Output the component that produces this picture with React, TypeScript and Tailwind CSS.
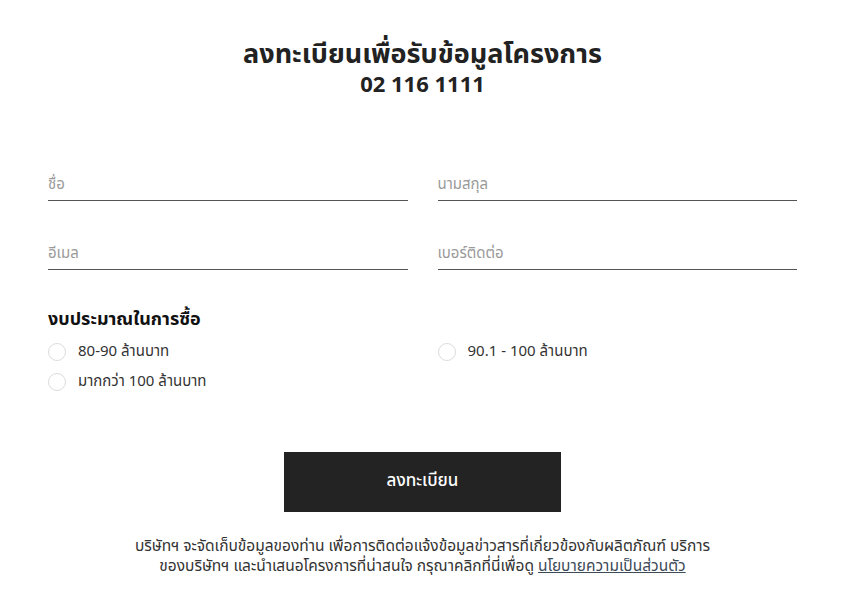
import React from "react";

const font = { fontFamily: '"Noto Sans Thai", "Noto Sans", "Liberation Sans", sans-serif' };

function Field({ label }: { label: string }) {
  return (
    <div className="border-b border-[#555] pb-[5px]">
      <div className="text-[15px] text-[#9a9a9a] leading-[20px]">{label}</div>
    </div>
  );
}

function Radio({ label }: { label: string }) {
  return (
    <div className="flex items-center gap-[12px] h-[20px]">
      <span className="w-[18px] h-[18px] rounded-full border border-[#dcdcdc]" />
      <span className="text-[15px] text-[#333]">{label}</span>
    </div>
  );
}

export default function App() {
  return (
    <div className="w-[845px] h-[601px] bg-white text-[#222]" style={font}>
      <div className="pt-[39px] text-center font-bold text-[#222]">
        <div className="text-[27px] leading-[31px]">ลงทะเบียนเพื่อรับข้อมูลโครงการ</div>
        <div className="text-[22px] leading-[31px]">02 116 1111</div>
      </div>
      <div className="px-[48px] mt-[74px] grid grid-cols-2 gap-x-[30px] gap-y-[43px]">
        <Field label="ชื่อ" />
        <Field label="นามสกุล" />
        <Field label="อีเมล" />
        <Field label="เบอร์ติดต่อ" />
      </div>
      <div className="px-[48px] mt-[39px]">
        <div className="font-bold text-[18px] leading-[22px] text-[#111]">งบประมาณในการซื้อ</div>
        <div className="mt-[11px] grid grid-cols-2 gap-x-[30px] gap-y-[10px]">
          <Radio label="80-90 ล้านบาท" />
          <Radio label="90.1 - 100 ล้านบาท" />
          <Radio label="มากกว่า 100 ล้านบาท" />
        </div>
      </div>
      <div className="flex justify-center mt-[60px]">
        <button className="w-[277px] h-[60px] bg-[#232323] text-white text-[17px] font-medium">
          ลงทะเบียน
        </button>
      </div>
      <div className="mt-[25px] text-center text-[15.5px] leading-[20px] text-[#333]">
        <div>บริษัทฯ จะจัดเก็บข้อมูลของท่าน เพื่อการติดต่อแจ้งข้อมูลข่าวสารที่เกี่ยวข้องกับผลิตภัณฑ์ บริการ</div>
        <div>
          ของบริษัทฯ และนำเสนอโครงการที่น่าสนใจ กรุณาคลิกที่นี่เพื่อดู{" "}
          <a className="underline text-[#3d4a57]">นโยบายความเป็นส่วนตัว</a>
        </div>
      </div>
    </div>
  );
}
